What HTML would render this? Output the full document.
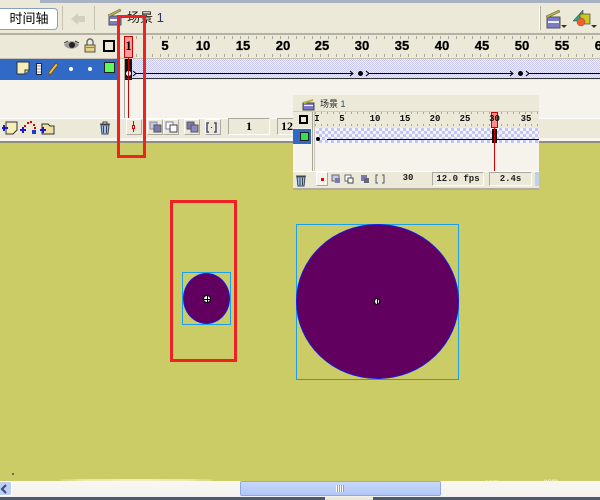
<!DOCTYPE html>
<html><head><meta charset="utf-8">
<style>
html,body{margin:0;padding:0}
body{width:600px;height:500px;position:relative;overflow:hidden;background:#cbcc66;font-family:"Liberation Sans","Noto Sans CJK SC",sans-serif}
.a{position:absolute;box-sizing:border-box}
.n{position:absolute;font:bold 13px/14px "Liberation Sans",sans-serif;color:#000;transform:translateX(-50%);white-space:nowrap;-webkit-text-stroke:.3px #000}
.m{position:absolute;font:bold 9px/10px "Liberation Mono",monospace;color:#111;transform:translateX(-50%);white-space:nowrap}
.checker{background-color:#eeeefa;background-image:conic-gradient(#c9c9f0 25%,#eeeefa 0 50%,#c9c9f0 0 75%,#eeeefa 0);background-size:2px 2px}
.checker2{background-color:#fff;background-image:conic-gradient(#c4c4f2 25%,#f4f4fc 0 50%,#c4c4f2 0 75%,#f4f4fc 0);background-size:6px 6px}
.ticks{background-image:repeating-linear-gradient(90deg,#aaa79a 0 1px,transparent 1px 8px)}
.btn{position:absolute;box-sizing:border-box;background:#ece9d8;border:1px solid;border-color:#fff #aaa8a0 #aaa8a0 #fff}
</style></head><body>

<!-- main panel -->
<div class="a" style="left:0;top:0;width:600px;height:143px;background:#ece9d8"></div>
<div class="a" style="left:40px;top:0;width:560px;height:3px;background:#a9b1c4"></div>
<div class="a" style="left:0;top:33px;width:600px;height:2px;background:#b5b2a4"></div>
<div class="a" style="left:0;top:58px;width:600px;height:1px;background:#c5c2b4"></div>

<!-- timeline button -->
<div class="a" style="left:-4px;top:8px;width:62px;height:22px;background:#fff;border:1px solid #8aa0c0;border-radius:4px;font-size:13px;line-height:20px;text-align:center;color:#000;padding-left:4px">时间轴</div>
<svg class="a" style="left:71px;top:13px" width="15" height="12"><path d="M0 6L7 0V3H14V9H7V12Z" fill="#d3d0c0"/></svg>
<div class="a" style="left:62px;top:6px;width:1px;height:24px;background:#c5c2b4"></div>
<div class="a" style="left:94px;top:6px;width:1px;height:24px;background:#c5c2b4"></div>

<!-- scene icon/title -->
<svg class="a" style="left:107px;top:8px" width="16" height="18"><rect x="2" y="8" width="12" height="9" fill="#7a7ac8" stroke="#555"/><rect x="3" y="11" width="10" height="2" fill="#fff"/><path d="M1 7L13 1L14 3L2 9Z" fill="#b8b040" stroke="#555" stroke-width=".5"/></svg>
<div class="a" style="left:127px;top:11px;font-size:13px;line-height:14px;color:#222;white-space:nowrap">场景 <span style="color:#303070">1</span></div>

<!-- right toolbar icons -->
<div class="a" style="left:539px;top:6px;width:1px;height:24px;background:#fff"></div>
<div class="a" style="left:540px;top:6px;width:1px;height:24px;background:#b5b2a4"></div>
<svg class="a" style="left:544px;top:8px" width="24" height="22"><rect x="3" y="9" width="13" height="11" fill="#7a7ac8" stroke="#555"/><rect x="4" y="13" width="11" height="2" fill="#eee"/><path d="M2 8L15 2L16 4L3 10Z" fill="#b8b040" stroke="#555" stroke-width=".5"/><path d="M17 17h6l-3 3Z" fill="#333"/></svg>
<svg class="a" style="left:572px;top:8px" width="28" height="22"><path d="M1 13L11 2V13Z" fill="#2ea58e" stroke="#333" stroke-width=".5"/><rect x="8" y="6" width="10" height="10" fill="#c8c820" stroke="#444" stroke-width=".7"/><circle cx="9" cy="14" r="4" fill="#e8642c" stroke="#a04020" stroke-width=".5"/><path d="M19 17h6l-3 3Z" fill="#333"/></svg>

<!-- ruler -->
<div class="a ticks" style="left:124px;top:36px;width:476px;height:3px;background-position:4px 0"></div>
<div class="a ticks" style="left:124px;top:54px;width:476px;height:3px;background-position:4px 0"></div>
<div class="n" style="left:165px;top:39px">5</div><div class="n" style="left:203px;top:39px">10</div><div class="n" style="left:243px;top:39px">15</div><div class="n" style="left:283px;top:39px">20</div><div class="n" style="left:322px;top:39px">25</div><div class="n" style="left:362px;top:39px">30</div><div class="n" style="left:402px;top:39px">35</div><div class="n" style="left:442px;top:39px">40</div><div class="n" style="left:482px;top:39px">45</div><div class="n" style="left:522px;top:39px">50</div><div class="n" style="left:562px;top:39px">55</div><div class="n" style="left:602px;top:39px">60</div>

<!-- header icons -->
<svg class="a" style="left:63px;top:40px" width="17" height="11"><path d="M1 5C5 0 12 0 16 5C12 10 5 10 1 5Z" fill="#999"/><circle cx="9" cy="5" r="3" fill="#222"/><path d="M1 3L5 1M12 1L16 3" stroke="#444"/></svg>
<svg class="a" style="left:84px;top:38px" width="12" height="15"><path d="M3 7V4A3 3 0 0 1 9 4V7" fill="none" stroke="#666" stroke-width="1.400"/><rect x="1" y="7" width="10" height="7" fill="#e4d080" stroke="#555"/><rect x="2" y="9" width="8" height="1" fill="#6688cc"/></svg>
<div class="a" style="left:103px;top:40px;width:12px;height:12px;border:2px solid #000;background:#ece9d8"></div>

<!-- layer row -->
<div class="a" style="left:0;top:59px;width:118px;height:21px;background:#3169c6"></div>
<svg class="a" style="left:16px;top:61px" width="14" height="14"><path d="M1 1H13V9L9 13H1Z" fill="#f6efb8" stroke="#333"/><path d="M9 13V9H13" fill="#ddd" stroke="#333"/></svg>
<svg class="a" style="left:35px;top:63px" width="8" height="12"><rect x="1.500" y=".5" width="5" height="11" fill="#fff" stroke="#223"/><path d="M2 3h4M2 6h4M2 9h4" stroke="#88a"/></svg>
<svg class="a" style="left:48px;top:62px" width="11" height="14"><path d="M8 1L10 3L3 12L1 13L1 10Z" fill="#f0c040" stroke="#6a4a10" stroke-width=".8"/></svg>
<div class="a" style="left:69px;top:67px;width:4px;height:4px;border-radius:50%;background:#fff"></div>
<div class="a" style="left:88px;top:67px;width:4px;height:4px;border-radius:50%;background:#fff"></div>
<div class="a" style="left:104px;top:62px;width:11px;height:11px;background:#5cfb5c;border:1px solid #222"></div>

<!-- empty area -->
<div class="a" style="left:0;top:80px;width:600px;height:38px;background:#f6f3ec"></div>
<div class="a" style="left:124px;top:59px;width:1px;height:79px;background:#a8a598"></div>
<!-- frames -->
<div class="a checker" style="left:132px;top:59px;width:468px;height:20px"></div>
<div class="a" style="left:118px;top:59px;width:6px;height:21px;background:#f1efe6"></div>
<div class="a" style="left:125px;top:59px;width:7px;height:21px;background:#111"></div>
<div class="a" style="left:125px;top:78px;width:475px;height:1px;background:#333"></div>
<svg class="a" style="left:132px;top:69px" width="468" height="9" fill="none" stroke="#000"><path d="M4 4.500H221M237 4.500H381M397 4.500H468M1 2L4 4.500L1 7M218 2L221 4.500L218 7M234 2L237 4.500L234 7M378 2L381 4.500L378 7M394 2L397 4.500L394 7"/></svg>
<div class="a" style="left:126px;top:71px;width:5px;height:5px;border-radius:50%;background:#fff"></div>
<div class="a" style="left:358px;top:71px;width:5px;height:5px;border-radius:50%;background:#000"></div>
<div class="a" style="left:518px;top:71px;width:5px;height:5px;border-radius:50%;background:#000"></div>
<!-- playhead -->
<div class="a" style="left:124px;top:36px;width:9px;height:22px;background:#ff9a9a;border:1px solid #cc0000"></div>
<div class="a" style="left:124px;top:39px;width:9px;text-align:center;font:bold 13px/14px 'Liberation Serif',serif">1</div>
<div class="a" style="left:128px;top:58px;width:1px;height:60px;background:#d40000"></div>

<!-- bottom controls -->
<div class="a" style="left:0;top:118px;width:600px;height:20px;background:#ece9d8;border-top:1px solid #fff"></div>
<div class="a" style="left:0;top:138px;width:600px;height:3px;background:#f8f6ee"></div>
<div class="a" style="left:0;top:141px;width:600px;height:2px;background:#8f8c80"></div>
<svg class="a" style="left:2px;top:120px" width="54" height="16"><path d="M4 2H15V10L11 14H4Z" fill="#f6efb8" stroke="#333"/><path d="M2 5V11M0 8H6" stroke="#1a1ad0" stroke-width="2"/><g fill="#e00000"><rect x="22" y="5" width="2" height="2"/><rect x="25" y="2" width="2" height="2"/><rect x="28" y="1" width="2" height="2"/><rect x="31" y="4" width="2" height="2"/><rect x="32" y="7" width="2" height="2"/></g><rect x="30" y="10" width="4" height="4" fill="#1a3ad0"/><path d="M21 7V13M18 10H24" stroke="#1a1ad0" stroke-width="2"/><path d="M40 4H46L48 6H52V14H40Z" fill="#f0e0a0" stroke="#333"/><path d="M41 7V13M38 10H44" stroke="#1a1ad0" stroke-width="2"/></svg>
<svg class="a" style="left:99px;top:121px" width="12" height="14"><path d="M1 3H11M4 3V1H8V3" stroke="#444" fill="none"/><path d="M2 4H10L9 13H3Z" fill="#a8c0e8" stroke="#345"/><path d="M4.500 5V12M7.500 5V12" stroke="#345"/></svg>
<div class="btn" style="left:126px;top:119px;width:16px;height:16px"></div>
<div class="a" style="left:133px;top:121px;width:1px;height:11px;background:#d00"></div>
<div class="a" style="left:132px;top:125px;width:3px;height:4px;background:#fff;border:1px solid #d00"></div>
<div class="btn" style="left:147px;top:119px;width:16px;height:16px"></div>
<div class="btn" style="left:163px;top:119px;width:16px;height:16px"></div>
<div class="btn" style="left:184px;top:119px;width:16px;height:16px"></div>
<div class="btn" style="left:205px;top:119px;width:16px;height:16px"></div>
<svg class="a" style="left:149px;top:121px" width="70" height="13"><rect x="1" y="1" width="7" height="7" fill="#c8c8e0" stroke="#8888b0"/><rect x="5" y="4" width="7" height="7" fill="#7a7ab0" stroke="#555"/><rect x="17" y="1" width="7" height="7" fill="#fff" stroke="#7a7ab0"/><rect x="21" y="4" width="7" height="7" fill="#fff" stroke="#444"/><rect x="38" y="1" width="7" height="7" fill="#7a7ab0" stroke="#555"/><rect x="42" y="4" width="7" height="7" fill="#8a8ac0" stroke="#555"/><path d="M60 2H58V11H60M65 2H67V11H65" stroke="#4a4a80" fill="none" stroke-width="1.500"/><rect x="62" y="6" width="1" height="1" fill="#222"/></svg>
<div class="a" style="left:228px;top:118px;width:42px;height:17px;border:1px solid;border-color:#aaa8a0 #fff #fff #aaa8a0;font:bold 12px/15px 'Liberation Serif',serif;text-align:center">1</div>
<div class="a" style="left:277px;top:118px;width:20px;height:17px;border:1px solid;border-color:#aaa8a0 #fff #fff #aaa8a0;font:bold 12px/15px 'Liberation Serif',serif;padding-left:3px;overflow:hidden">12</div>

<!-- stage shapes -->
<div class="a" style="left:182px;top:272px;width:49px;height:53px;border:1px solid #1aa0e8"></div>
<div class="a" style="left:183px;top:273px;width:47px;height:51px;border-radius:50%;background:#620060;border:1px solid #1a1ae0"></div>
<div class="a" style="left:203px;top:295px;width:8px;height:8px;border-radius:50%;background:#fff;border:1px solid #000"></div>
<div class="a" style="left:206.500px;top:296px;width:1px;height:6px;background:#000"></div>
<div class="a" style="left:204px;top:298.500px;width:6px;height:1px;background:#000"></div>

<div class="a" style="left:296px;top:224px;width:163px;height:156px;border:1px solid #1aa0e8"></div>
<div class="a" style="left:296px;top:224px;width:163px;height:155px;border-radius:50%;background:#620060;border:1px solid #1a1ae0"></div>
<div class="a" style="left:374px;top:298px;width:6px;height:7px;border-radius:50%;background:#fff;border:1px solid #000"></div>
<div class="a" style="left:377px;top:299px;width:1px;height:5px;background:#000"></div>

<!-- red annotations -->
<div class="a" style="left:117px;top:15px;width:29px;height:143px;border:3px solid #ee2222"></div>
<div class="a" style="left:170px;top:200px;width:67px;height:162px;border:3px solid #ee2222"></div>

<!-- floating scene panel -->
<div class="a" style="left:293px;top:95px;width:246px;height:95px;background:#f6f3ec;overflow:hidden">
  <div class="a" style="left:0;top:0;width:246px;height:16px;background:#ece9d8"></div>
  <div class="a" style="left:0;top:16px;width:246px;height:17px;background:#ece9d8;border-top:1px solid #d0cdc0"></div>
  <svg class="a" style="left:9px;top:3px" width="14" height="13"><rect x="1" y="5" width="11" height="7" fill="#7a7ac8" stroke="#444"/><rect x="2" y="7" width="9" height="1" fill="#fff"/><path d="M1 4L11 1L11 3L2 6Z" fill="#b8b040"/></svg>
  <div class="a" style="left:27px;top:4px;font-size:9px;line-height:11px;color:#222;white-space:nowrap">场景 <span style="color:#205060">1</span></div>
  <div class="a" style="left:6px;top:20px;width:9px;height:9px;border:2px solid #000;background:#ece9d8"></div>
  <div class="a" style="left:19px;top:17px;width:1px;height:78px;background:#a8a598"></div>
  <div class="a" style="left:21px;top:17px;width:1px;height:78px;background:#c8c5b8"></div>
  <div class="a ticks" style="left:22px;top:17px;width:224px;height:2px;background-size:6px 2px;background-image:repeating-linear-gradient(90deg,#aaa79a 0 1px,transparent 1px 6px)"></div>
  <div class="a" style="left:22px;top:29px;width:224px;height:2px;background-image:repeating-linear-gradient(90deg,#aaa79a 0 1px,transparent 1px 6px)"></div>
  <div class="m" style="left:24px;top:19px">I</div><div class="m" style="left:49px;top:19px">5</div><div class="m" style="left:82px;top:19px">10</div><div class="m" style="left:112px;top:19px">15</div><div class="m" style="left:142px;top:19px">20</div><div class="m" style="left:172px;top:19px">25</div><div class="m" style="left:233px;top:19px">35</div>
  <div class="a" style="left:0;top:34px;width:18px;height:15px;background:#3169c6"></div>
  <div class="a" style="left:7px;top:37px;width:9px;height:9px;background:#33dd55;border:1px solid #222"></div>
  <div class="a checker2" style="left:23px;top:33px;width:223px;height:15px"></div>
  <div class="a" style="left:34px;top:44px;width:212px;height:1px;background:#000"></div>
  <div class="a" style="left:23px;top:42px;width:4px;height:4px;border-radius:50%;background:#000"></div>
  <div class="a" style="left:199px;top:34px;width:5px;height:14px;background:#111"></div>
  <div class="a" style="left:198px;top:17px;width:7px;height:16px;background:#ff8a8a;border:1px solid #c00"></div>
  <div class="m" style="left:201.500px;top:19px">30</div>
  <div class="a" style="left:201px;top:33px;width:1px;height:43px;background:#d40000"></div>
  <div class="a" style="left:0;top:76px;width:246px;height:17px;background:#ece9d8;border-top:1px solid #fff"></div>
  <div class="a" style="left:0;top:93px;width:246px;height:2px;background:#b0ad9f"></div>
  <svg class="a" style="left:2px;top:78px" width="12" height="14"><path d="M1 3H11" stroke="#444"/><path d="M2 4H10L9 13H3Z" fill="#a8c0e8" stroke="#345"/><path d="M5 5V12M7.500 5V12" stroke="#345"/></svg>
  <div class="btn" style="left:23px;top:77px;width:12px;height:14px;background:#f6f3ec"></div>
  <div class="a" style="left:28px;top:83px;width:3px;height:3px;background:#e00"></div>
  <svg class="a" style="left:38px;top:79px" width="60" height="11"><rect x="1" y="1" width="7" height="6" fill="#c8c8e0" stroke="#667"/><rect x="4" y="4" width="5" height="5" fill="#7a7ab0"/><rect x="14" y="1" width="6" height="6" fill="#fff" stroke="#667"/><rect x="17" y="4" width="5" height="5" fill="#fff" stroke="#444"/><rect x="30" y="1" width="6" height="6" fill="#7a7ab0"/><rect x="33" y="4" width="5" height="5" fill="#667"/><path d="M47 1H45V9H47M51 1H53V9H51" stroke="#556" fill="none"/></svg>
  <div class="a" style="left:97px;top:76px;width:36px;height:15px;font:bold 9px/15px 'Liberation Mono',monospace;text-align:center;color:#222">30</div>
  <div class="a" style="left:139px;top:77px;width:52px;height:14px;border:1px solid;border-color:#aaa8a0 #fff #fff #aaa8a0;font:bold 9px/13px 'Liberation Mono',monospace;text-align:center;color:#222">12.0 fps</div>
  <div class="a" style="left:196px;top:77px;width:43px;height:14px;border:1px solid;border-color:#aaa8a0 #fff #fff #aaa8a0;font:bold 9px/13px 'Liberation Mono',monospace;text-align:center;color:#222">2.4s</div>
  <div class="a" style="left:242px;top:77px;width:4px;height:14px;background:#bcd0f0"></div>
</div>

<!-- faint marks on stage -->
<div class="a" style="left:60px;top:479px;width:153px;height:2px;background:#eeeec0;border-radius:50%"></div>
<div class="a" style="left:12px;top:473px;width:2px;height:2px;background:#667"></div>

<!-- scrollbar -->
<div class="a" style="left:0;top:481px;width:600px;height:16px;background:linear-gradient(#f8f7f2,#f3f2ec)"></div>
<div class="a" style="left:-2px;top:481px;width:14px;height:15px;background:#bcd0f8;border:1px solid #fff;border-radius:2px"></div>
<svg class="a" style="left:0;top:484px" width="8" height="10"><path d="M6 1L2 5L6 9" fill="none" stroke="#3a4a70" stroke-width="2"/></svg>
<div class="a" style="left:240px;top:481px;width:201px;height:15px;background:linear-gradient(#c8d8fc,#b0c6f4);border:1px solid #8fa8e0;border-radius:2px"></div>
<div class="a" style="left:336px;top:485px;width:8px;height:7px;background:repeating-linear-gradient(90deg,#fff 0 1px,#7fa0e0 1px 2px)"></div>
<div class="a" style="left:482px;top:479px;font:8px/8px 'Liberation Sans',sans-serif;color:#f4f4e0;white-space:nowrap">.com</div>
<div class="a" style="left:541px;top:478px;font:8px/8px 'Liberation Sans',sans-serif;color:#f4f4e0;white-space:nowrap">.com</div>
<div class="a" style="left:0;top:497px;width:600px;height:3px;background:#4a5a70"></div>
<div class="a" style="left:325px;top:497px;width:48px;height:3px;background:#ece9d8"></div>
</body></html>
